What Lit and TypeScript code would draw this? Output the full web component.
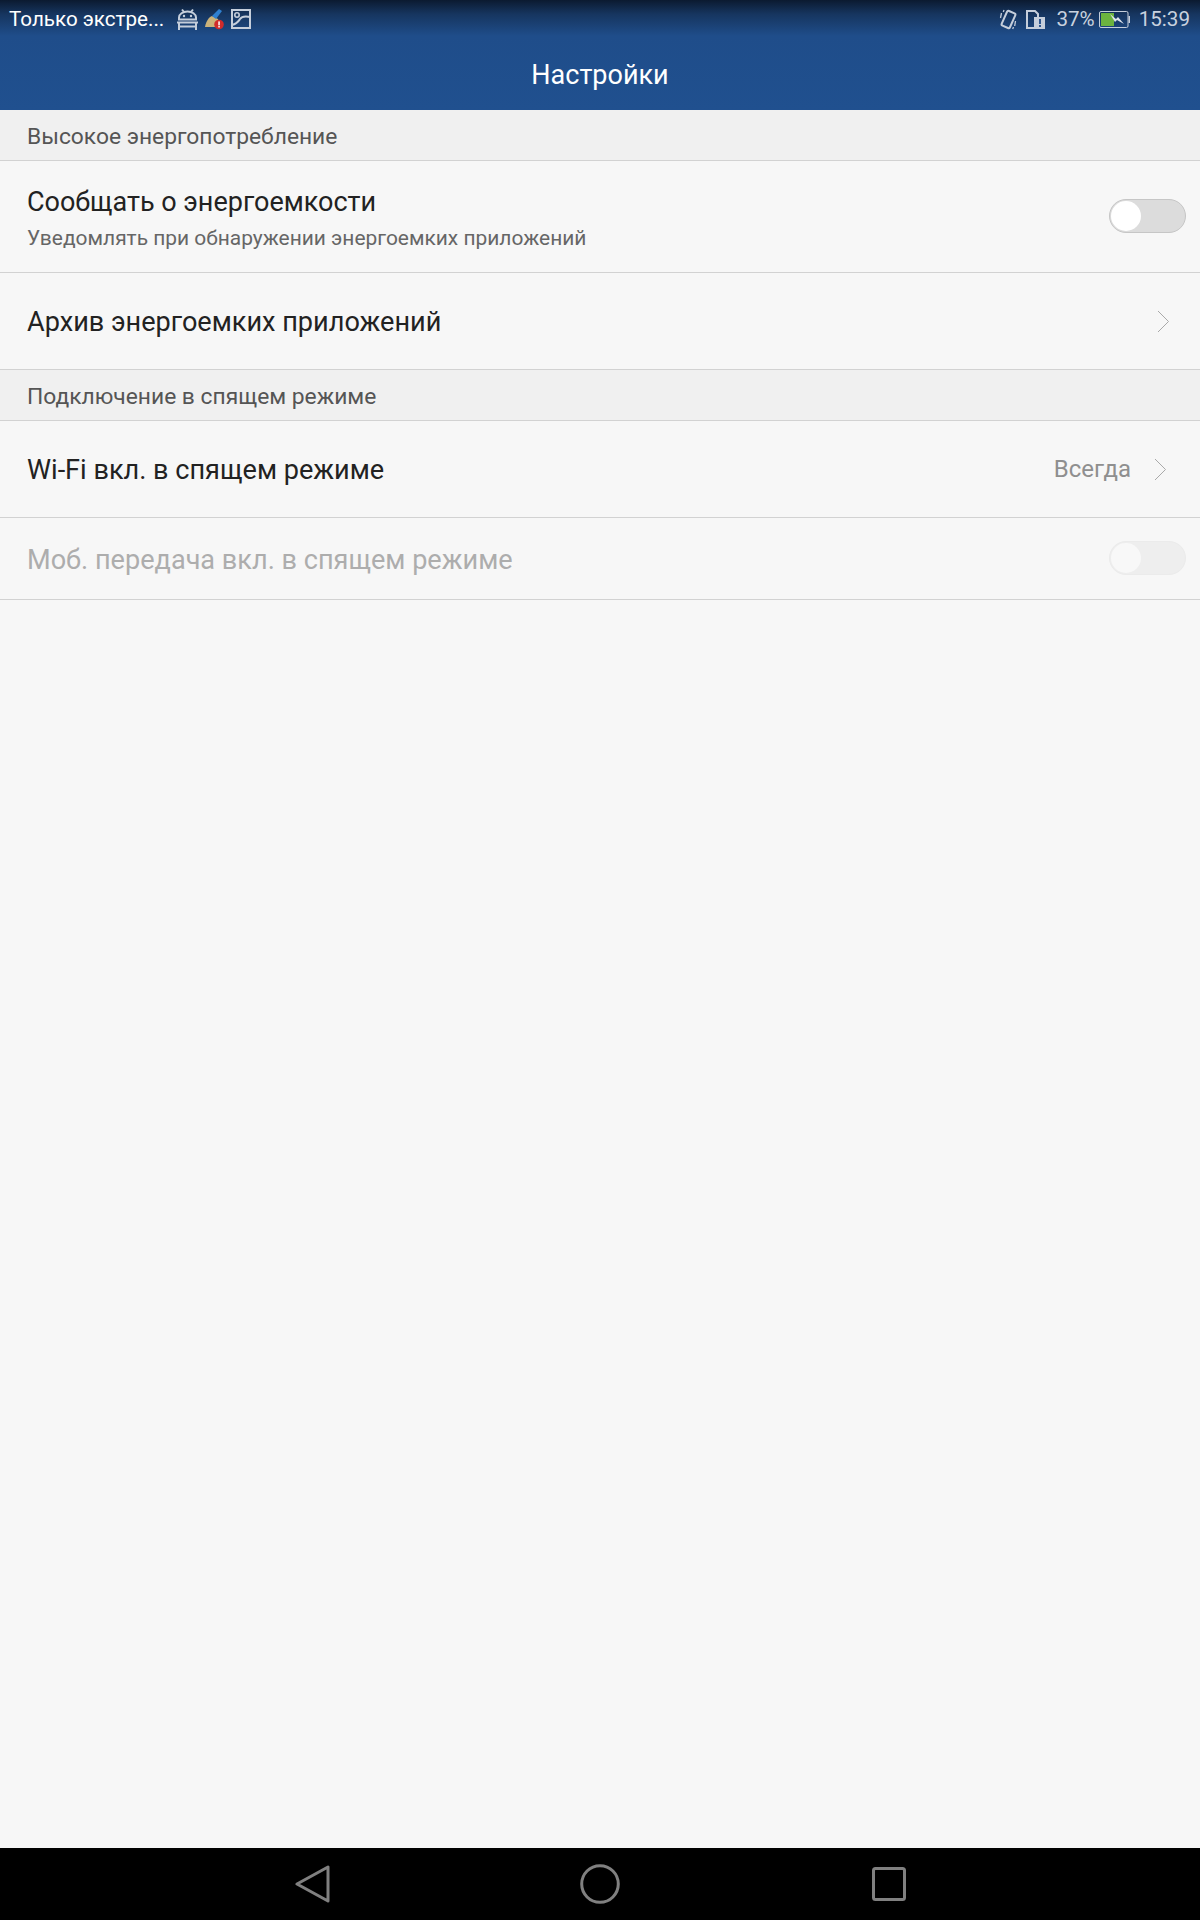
import { LitElement, html, css } from "lit";
import { customElement } from "lit/decorators.js";

const chevron = html`<svg class="chev" width="13" height="23" viewBox="0 0 13 23"><path d="M1 1l10.5 10.5L1 22" fill="none" stroke="#a9a9a9" stroke-width="1"/></svg>`;

@customElement("app-root")
export class AppRoot extends LitElement {
  static styles = css`
    :host { display: flex; flex-direction: column; width: 1200px; height: 1920px; background: #f7f7f7; font-family: Roboto, "Liberation Sans", sans-serif; overflow: hidden; }
    .top { height: 110px; flex: none; display: flex; flex-direction: column; background: linear-gradient(180deg, #0b1a30 0, #16355f 14px, #1f4d8a 36px, #20508f 110px); color: #fff; }
    .status { height: 38px; flex: none; display: flex; align-items: center; padding: 0 10px 0 9px; font-size: 20.6px; color: #c9d2df; }
    .carrier { color: #fff; width: 155px; white-space: nowrap; margin-right: 13px; }
    .icons { display: flex; align-items: center; gap: 7px; }
    .spacer { flex: 1; }
    .status svg { display: block; flex: none; overflow: visible; }
    .sim { margin-left: 9px; }
    .pct { margin: 0 4px 0 11px; }
    .time { margin-left: 9px; }
    .title { flex: 1; display: flex; align-items: center; justify-content: center; font-size: 27px; padding-top: 2px; }
    .section { height: 50px; flex: none; display: flex; align-items: center; padding-left: 27px; background: #f0f0f0; border-bottom: 1px solid #d2d2d2; font-size: 22.8px; color: #555; }
    .section .label { position: relative; top: 1px; }
    .row { flex: none; display: flex; align-items: center; padding: 0 14px 0 27px; border-bottom: 1px solid #d2d2d2; box-sizing: border-box; }
    .r1 { height: 112px; }
    .r2 { height: 97px; }
    .r3 { height: 97px; }
    .r4 { height: 82px; }
    .text { flex: 1; min-width: 0; }
    .name { font-size: 27.1px; color: #222; line-height: 34px; padding-top: 2px; }
    .r1 .name { padding-top: 3px; font-size: 27px; }
    .sub { font-size: 20.95px; color: #666; line-height: 26px; margin-top: 6px; }
    .dim { color: #adadad; }
    .val { font-size: 24px; color: #8f8f8f; margin-right: 23px; }
    .chev { display: block; flex: none; margin-right: 3px; }
    .r2 .chev { margin-right: 16px; }
    .r3 .chev { margin-right: 19px; }
    .sw { width: 77px; height: 34px; box-sizing: border-box; border-radius: 17px; border: 1px solid #c6c6c6; background: #dcdcdc; flex: none; padding: 1px; margin-bottom: 2px; }
    .knob { height: 30px; width: 30px; border-radius: 50%; background: #fff; }
    .sw.off { background: #eeeeee; border-color: #ebebeb; }
    .sw.off .knob { background: #f8f8f8; }
    .fill { flex: 1; }
    .nav { height: 72px; flex: none; background: #000; display: flex; align-items: center; }
    .nav svg { display: block; }
    .b1 { margin-left: 295px; }
    .b2 { margin-left: 250px; }
    .b3 { margin-left: 252px; }
  `;

  render() {
    return html`
      <div class="top">
        <div class="status">
          <span class="carrier">Только экстре...</span>
          <div class="icons">
            <svg width="21" height="21" viewBox="0 0 21 21" fill="none" stroke="#c5cedb" stroke-width="2">
              <path d="M2 10.5V8.5a8.5 6 0 0 1 17 0v2z"/>
              <path d="M0 13.5h21M2 13.5V21M19 13.5V21M2 17.5h17"/>
              <path d="M5 .5l2 2.5M16 .5l-2 2.5"/>
              <circle cx="7" cy="7" r="1.2" fill="#c5cedb" stroke="none"/>
              <circle cx="14" cy="7" r="1.2" fill="#c5cedb" stroke="none"/>
            </svg>
            <svg width="19" height="20" viewBox="0 0 19 20">
              <path d="M0 18c1-6 4-10 7-11l6 3c1 3 1 6 0 8z" fill="#cbb27a"/>
              <path d="M7 7l7-7 3 2-6 8z" fill="#2f80d0"/>
              <circle cx="14" cy="15.5" r="4.8" fill="#d12b2b"/>
              <rect x="13.3" y="12.4" width="1.5" height="4" fill="#fff"/>
              <rect x="13.3" y="17" width="1.5" height="1.5" fill="#fff"/>
            </svg>
            <svg width="20" height="20" viewBox="0 0 20 20" fill="none" stroke="#c5cedb" stroke-width="2">
              <rect x="1" y="1" width="18" height="18"/>
              <path d="M1 16c5-1 6-3 8-6s5-3 10-2"/>
              <circle cx="6" cy="6" r="2.2" stroke-width="1.6"/>
            </svg>
          </div>
          <div class="spacer"></div>
          <svg width="17" height="19" viewBox="0 0 17 19" fill="none" stroke="#c5cedb">
            <rect x="4" y="1.5" width="9" height="16" rx="1.5" transform="rotate(24 8.5 9.5)" stroke-width="2"/>
            <path d="M1.5 3L.5 8M4 0L3.300 2M15.500 11l-.8 5M13.500 17l-.8 2" stroke-width="1.3"/>
          </svg>
          <svg class="sim" width="19" height="19" viewBox="0 0 19 19">
            <path d="M1 1h8l3 3v4h-3v10H1z" fill="none" stroke="#c5cedb" stroke-width="2"/>
            <rect x="9" y="7" width="10" height="12" fill="#c5cedb"/>
            <rect x="13.100" y="9" width="1.800" height="5" fill="#1d4a85"/>
            <rect x="13.100" y="15" width="1.800" height="2" fill="#1d4a85"/>
          </svg>
          <span class="pct">37%</span>
          <svg width="31" height="17" viewBox="0 0 31 17">
            <rect x=".5" y=".5" width="28.500" height="16" rx="1.500" fill="none" stroke="#c5cedb"/>
            <path d="M29.500 5h1.500v7h-1.500z" fill="#c5cedb"/>
            <rect x="2" y="2" width="13" height="13" fill="#6cb33f"/>
            <path d="M11 3l6 5 2-2 6 7-7-4-2 2z" fill="#dfe5ec"/>
          </svg>
          <span class="time">15:39</span>
        </div>
        <div class="title">Настройки</div>
      </div>
      <div class="section"><span class="label">Высокое энергопотребление</span></div>
      <div class="row r1">
        <div class="text"><div class="name">Сообщать о энергоемкости</div><div class="sub">Уведомлять при обнаружении энергоемких приложений</div></div>
        <div class="sw"><div class="knob"></div></div>
      </div>
      <div class="row r2"><div class="text"><div class="name">Архив энергоемких приложений</div></div>${chevron}</div>
      <div class="section"><span class="label">Подключение в спящем режиме</span></div>
      <div class="row r3"><div class="text"><div class="name">Wi-Fi вкл. в спящем режиме</div></div><span class="val">Всегда</span>${chevron}</div>
      <div class="row r4"><div class="text"><div class="name dim">Моб. передача вкл. в спящем режиме</div></div><div class="sw off"><div class="knob"></div></div></div>
      <div class="fill"></div>
      <div class="nav">
        <svg class="b1" width="35" height="38" viewBox="0 0 35 38"><path d="M33 2v34L2 19z" fill="none" stroke="#808080" stroke-width="3" stroke-linejoin="round"/></svg>
        <svg class="b2" width="40" height="40" viewBox="0 0 40 40"><circle cx="20" cy="20" r="18.300" fill="none" stroke="#808080" stroke-width="3"/></svg>
        <svg class="b3" width="34" height="34" viewBox="0 0 34 34"><rect x="1.500" y="1.500" width="31" height="31" rx="2" fill="none" stroke="#808080" stroke-width="3"/></svg>
      </div>
    `;
  }
}
